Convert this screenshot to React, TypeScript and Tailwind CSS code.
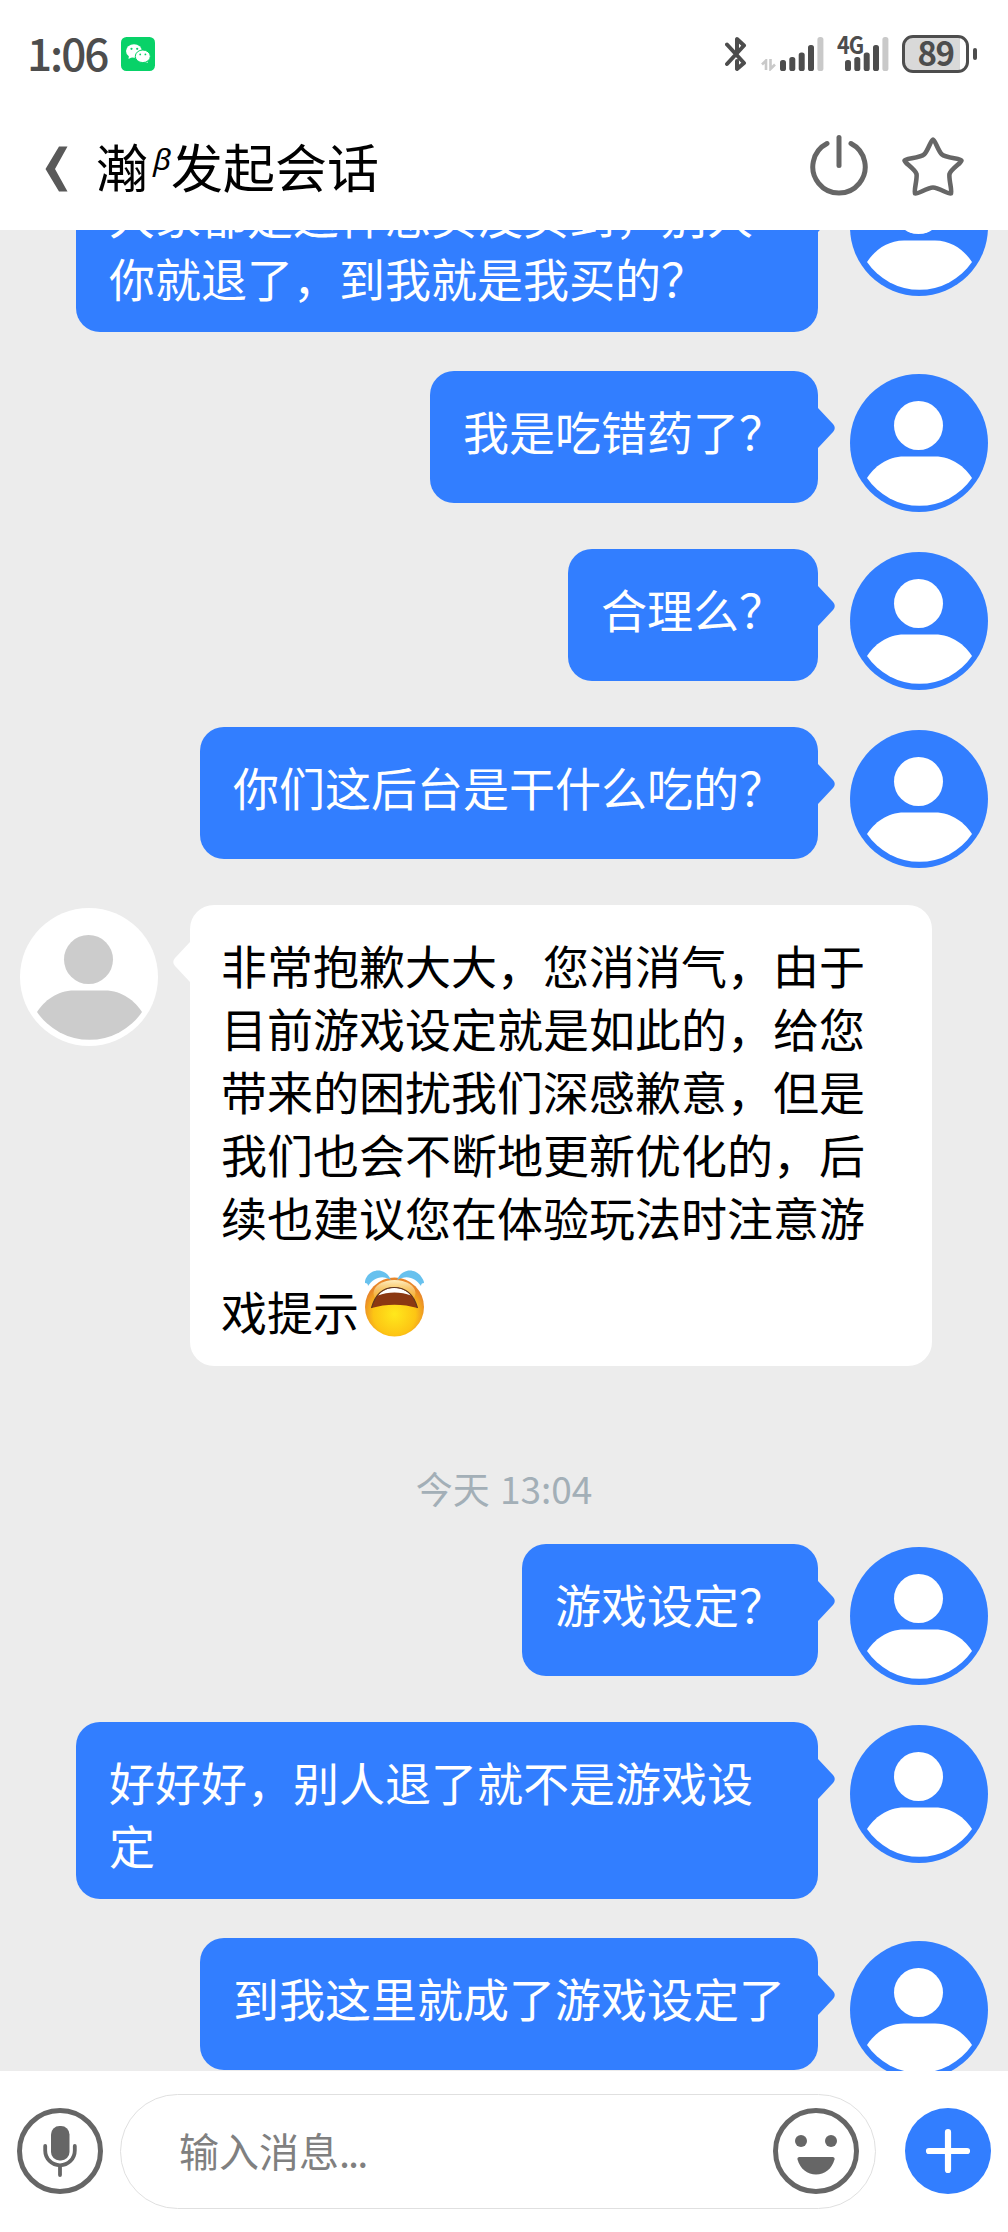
import React from 'react';

interface Message {
  id: number;
  from: 'me' | 'service';
  text: string;
  emoji?: boolean;
  time?: string;
}

const messages: Message[] = [
  { id: 1, from: 'me', text: '大家都是这样想买没买到，别人你就退了，到我就是我买的？' },
  { id: 2, from: 'me', text: '我是吃错药了？' },
  { id: 3, from: 'me', text: '合理么？' },
  { id: 4, from: 'me', text: '你们这后台是干什么吃的？' },
  {
    id: 5,
    from: 'service',
    text: '非常抱歉大大，您消消气，由于目前游戏设定就是如此的，给您带来的困扰我们深感歉意，但是我们也会不断地更新优化的，后续也建议您在体验玩法时注意游戏提示',
    emoji: true,
  },
  { id: 6, from: 'me', text: '游戏设定？', time: '今天 13:04' },
  { id: 7, from: 'me', text: '好好好，别人退了就不是游戏设定' },
  { id: 8, from: 'me', text: '到我这里就成了游戏设定了' },
];

function WeChatIcon() {
  return (
    <svg className="w-[34px] h-[34px]" viewBox="0 0 34 34">
      <rect width="34" height="34" rx="5.5" fill="#08d268" />
      <path d="M8 18l-.5 4 4-2z" fill="#fff" />
      <ellipse cx="13" cy="14" rx="8" ry="6.800" fill="#fff" />
      <path d="M25 22l2 4-5-2z" fill="#fff" />
      <ellipse cx="21.8" cy="19.3" rx="7.5" ry="6.300" fill="#fff" stroke="#08d268" strokeWidth="1" />
      <g fill="#08d268">
        <circle cx="10.5" cy="11.8" r="1.1" />
        <circle cx="16.2" cy="11.8" r="1.1" />
        <circle cx="19.2" cy="17.4" r="0.9" />
        <circle cx="24.4" cy="17.4" r="0.9" />
      </g>
    </svg>
  );
}

function BluetoothIcon() {
  return (
    <svg className="w-[22px] h-[36px]" viewBox="0 0 22 36" fill="none" stroke="#4d4d4d" strokeWidth="4" strokeLinecap="round" strokeLinejoin="round">
      <path d="M2 8.500L19 27l-7 6v-8M2 28L19 9.500L12 3v15" />
    </svg>
  );
}

function SignalBars() {
  return (
    <svg className="w-[44px] h-[34px]" viewBox="0 0 44 34" fill="#4d4d4d">
      <rect x="0" y="23" width="6" height="11" rx="2.600" />
      <rect x="9.300" y="20" width="6" height="14" rx="2.600" />
      <rect x="18.700" y="15.500" width="6" height="18.500" rx="2.600" />
      <rect x="28" y="8" width="6" height="26" rx="2.600" />
      <rect x="37.400" y="0" width="6" height="34" rx="2.600" fill="#c9c9c9" />
    </svg>
  );
}

function StatusBar() {
  return (
    <div className="h-[108px] flex items-center justify-between pl-[27px] pr-[31px]">
      <div className="flex items-center gap-3">
        <span className="w-[82px] mb-[5px] text-[44px] leading-[44px] font-medium tracking-[-2px] text-[#4d4d4d] whitespace-nowrap">1:06</span>
        <WeChatIcon />
      </div>
      <div className="flex items-center">
        <BluetoothIcon />
        <svg className="w-[15px] h-[12px] ml-[14px] mt-[22px]" viewBox="0 0 15 12" fill="none" stroke="#c9c9c9" strokeWidth="2.600">
          <path d="M1 5.500L5 1.500V11M9.500 0V10L14 5.500" />
        </svg>
        <div className="ml-[4px]">
          <SignalBars />
        </div>
        <div className="relative ml-[21px]">
          <SignalBars />
          <span className="absolute -left-[8px] -top-[5px] origin-left scale-x-90 text-[24px] leading-[24px] font-bold tracking-[-1px] text-[#4d4d4d]">4G</span>
        </div>
        <div className="ml-[13px] w-[67px] h-[38px] pb-[4px] rounded-[11px] border-[3px] border-[#4d4d4d] bg-[linear-gradient(to_right,#d9d9d9_55px,#fff_55px)] flex items-center justify-center text-[33px] leading-[28px] font-bold tracking-[-1.5px] text-[#4d4d4d]">
          89
        </div>
        <div className="ml-[4px] w-[4px] h-[12px] rounded-sm bg-[#4d4d4d]" />
      </div>
    </div>
  );
}

function TitleBar() {
  return (
    <div className="h-[122px] flex items-center pb-[6px] pl-[45px] pr-[44px]">
      <svg className="mt-[5px] w-[23px] h-[46px]" viewBox="0 0 23 46" fill="#595959">
        <path d="M14 .5h8.500L10 23l12.500 22.500H14L.5 23z" />
      </svg>
      <h1 className="ml-[28px] flex-1 flex items-center text-[52px] leading-[52px] text-black whitespace-nowrap">
        瀚
        <span className="w-[23px] text-center text-[48px] italic font-['Noto_Sans']">ᵝ</span>
        发起会话
      </h1>
      <svg className="w-[58px] h-[62px]" viewBox="0 1 58 62" fill="none" stroke="#666" strokeWidth="5" strokeLinecap="round">
        <path d="M17 9.500A26.200 26.200 0 1 0 41 9.500" />
        <path d="M29 3.500v28" />
      </svg>
      <svg className="ml-[34px] w-[62px] h-[62px]" viewBox="0 0 62 62" fill="none" stroke="#666" strokeWidth="4.600" strokeLinejoin="round">
        <path d="M31 4.500C33 4.500 36 16 40 19.500C44 23 59 23.500 59.500 25.500C60 27.500 49 34 47.500 39C46.500 43.500 50.500 57 49 58.500C47 60 37 52.500 31 52.500C25 52.500 15 60 13 58.500C11.500 57 15.500 43.500 14.500 39C13 34 2 27.500 2.500 25.500C3 23.500 18 23 22 19.500C26 16 29 4.500 31 4.500Z" />
      </svg>
    </div>
  );
}

function Avatar({ mine }: { mine: boolean }) {
  return (
    <svg className="mt-[3px] w-[138px] h-[138px] shrink-0" viewBox="0 0 138 138">
      <circle cx="69" cy="69" r="69" fill={mine ? '#327eff' : '#fff'} />
      <g fill={mine ? '#fff' : '#ccc'}>
        <circle cx="68.5" cy="51.5" r="24.5" />
        <path d="M17 104C24 93 37 82.500 54 82.500H85C102 82.500 115 93 122 104A63.500 63.500 0 0 1 17 104Z" />
      </g>
    </svg>
  );
}

function CryingEmoji() {
  return (
    <svg className="inline-block w-[72px] h-[98px] align-[-16px]" viewBox="0 -3 72 98">
      <defs>
        <radialGradient id="face" cx="50%" cy="62%" r="55%">
          <stop offset="0%" stopColor="#ffe81c" />
          <stop offset="65%" stopColor="#fdc514" />
          <stop offset="100%" stopColor="#e8862a" />
        </radialGradient>
        <linearGradient id="shine" x1="0" y1="0" x2="0" y2="1">
          <stop offset="0%" stopColor="#fff0c0" />
          <stop offset="100%" stopColor="#fbc23e" stopOpacity="0" />
        </linearGradient>
      </defs>
      <circle cx="35.500" cy="56" r="29.500" fill="url(#face)" />
      <ellipse cx="35.500" cy="42" rx="21" ry="13" fill="url(#shine)" />
      <path d="M12.500 57C16 44 24 36.500 35 36.500C47 36.500 55 44 58.500 57C44 52.500 27 52.500 12.500 57Z" fill="#8b3812" />
      <path d="M19 44.500C23 39.500 29 37 35 37C42 37 48 39.500 52 44.500C42 40.500 29 40.500 19 44.500Z" fill="#fff" />
      <path d="M12.500 57C16 44 24 36.500 35 36.500C47 36.500 55 44 58.500 57" fill="none" stroke="#5d3520" strokeWidth="1.200" />
      <path d="M32 29C28 19 17 16 9 24C6 28 6 30 6 32C8 32 9 33 9 35C14 28 22 23 32 29Z" fill="#67c1ee" />
      <path d="M38 29C42 19 53 16 61 24C64 28 65 30 65 32C63 32 62 33 62 35C57 28 49 23 38 29Z" fill="#67c1ee" />
    </svg>
  );
}

function MessageRow({ message }: { message: Message }) {
  const mine = message.from === 'me';

  return (
    <div className={`flex items-start min-h-[178px] px-5 ${mine ? 'justify-end' : 'flex-row-reverse justify-end'}`}>
      <div
        className={`relative mb-[39px] max-w-[742px] min-h-[132px] rounded-[24px] pt-[28px] text-[46px] leading-[63px] ${
          mine ? 'mr-8 px-[33px] pb-[23px] bg-[#327eff] text-white' : 'ml-8 pl-[31px] pr-[35px] pb-5 bg-white text-black'
        }`}
      >
        {message.text}
        {message.emoji && <CryingEmoji />}
        <svg
          className={`absolute top-[36px] w-[18px] h-[42px] ${mine ? '-right-[17px]' : '-left-[17px] -scale-x-100'}`}
          viewBox="0 0 18 42"
          fill={mine ? '#327eff' : '#fff'}
        >
          <path d="M0 0L1 1L16 17Q19.500 21 16 25L1 41L0 42Z" />
        </svg>
      </div>
      <Avatar mine={mine} />
    </div>
  );
}

function InputBar() {
  return (
    <div className="h-[161px] shrink-0 bg-white flex items-center pb-px pl-[17px] pr-[17px]">
      <svg className="w-[86px] h-[86px]" viewBox="0 0 86 86" fill="none" stroke="#666">
        <circle cx="43" cy="43" r="40.500" strokeWidth="5" />
        <rect x="34" y="18" width="18.500" height="34.500" rx="8.500" fill="#666" stroke="none" />
        <path d="M28.200 38v4.500a14.800 14.800 0 0 0 29.600 0V38M43 58v9" strokeWidth="3.800" strokeLinecap="round" />
      </svg>
      <div className="ml-[17px] w-[756px] h-[115px] rounded-full border border-[#e0e0e0] flex items-center justify-between pl-[58px] pr-4">
        <span className="mb-[3px] text-[40px] leading-[56px] text-[#808080]">
          输入消息<span className="tracking-[-2px]">...</span>
        </span>
        <svg className="w-[86px] h-[86px]" viewBox="0 0 86 86" fill="#666">
          <circle cx="43" cy="43" r="40.500" fill="none" stroke="#666" strokeWidth="5" />
          <circle cx="28" cy="33" r="6" />
          <circle cx="58" cy="33" r="6" />
          <path d="M26.500 49H59.500Q62 49 61.500 51.500C59 61 51.500 66.500 43 66.500C34.500 66.500 27 61 24.500 51.500Q24 49 26.500 49Z" />
        </svg>
      </div>
      <svg className="ml-[29px] w-[86px] h-[86px]" viewBox="0 0 86 86">
        <circle cx="43" cy="43" r="43" fill="#327eff" />
        <path d="M24 43h38M43 24v38" stroke="#fff" strokeWidth="6.200" strokeLinecap="round" />
      </svg>
    </div>
  );
}

export default function App() {
  return (
    <div lang="zh-CN" className="w-[1008px] h-[2232px] flex flex-col overflow-hidden bg-[#ececec] font-['Noto_Sans_CJK_SC',sans-serif]">
      {/* Header */}
      <header className="h-[230px] shrink-0 bg-white relative z-10">
        <StatusBar />
        <TitleBar />
      </header>

      {/* Conversation, scrolled to the latest message */}
      <main className="flex-1 min-h-0 overflow-hidden">
        <div className="-mt-[75px]">
          {messages.map((message) => (
            <React.Fragment key={message.id}>
              {message.time && (
                <div className="h-[139px] pt-[56px] text-center text-[37px] leading-[54px] [word-spacing:2px] text-[#a3afb7]">{message.time}</div>
              )}
              <MessageRow message={message} />
            </React.Fragment>
          ))}
        </div>
      </main>

      {/* Input */}
      <InputBar />
    </div>
  );
}
